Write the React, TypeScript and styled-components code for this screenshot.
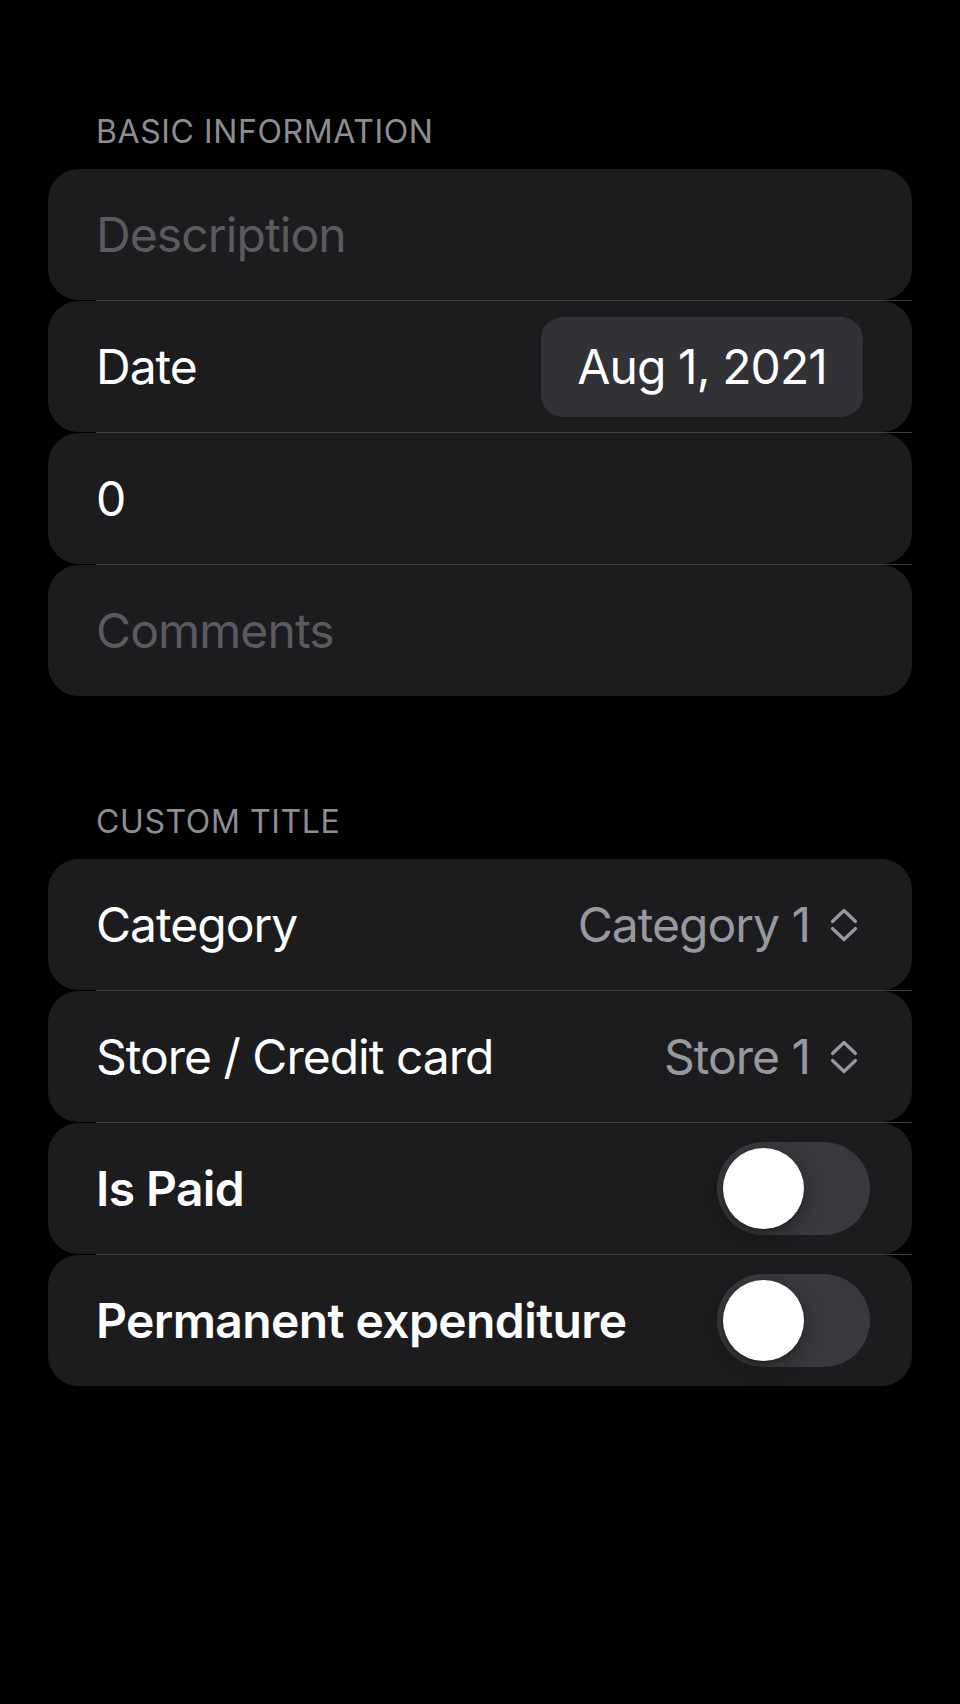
import React from "react";
import styled, { createGlobalStyle } from "styled-components";

const GlobalStyle = createGlobalStyle`
  html, body {
    margin: 0;
    padding: 0;
    background: #000;
  }
  * { box-sizing: border-box; }
`;

const Page = styled.div`
  width: 960px;
  min-height: 1704px;
  background: #000;
  padding: 106px 48px 0;
  font-family: Inter, "Noto Sans", sans-serif;
  -webkit-font-smoothing: antialiased;
`;

const Section = styled.section`
  margin-bottom: 100px;
`;

const SectionHeader = styled.div`
  padding-left: 48px;
  padding-top: 2px;
  font-size: 32px;
  line-height: 48px;
  color: #8d8d93;
  text-transform: uppercase;
  letter-spacing: 0.6px;
  margin-bottom: 13px;
`;

const List = styled.div`
  display: flex;
  flex-direction: column;
`;

const Row = styled.div`
  height: 131px;
  background: #1c1c1e;
  border-radius: 31px;
  display: flex;
  align-items: center;
  justify-content: space-between;
  padding: 0 48px;
`;

const Divider = styled.div`
  height: 1px;
  margin-left: 48px;
  background: #3d3d41;
`;

const Label = styled.span<{ $bold?: boolean }>`
  font-size: 48px;
  color: #fff;
  font-weight: ${(p) => (p.$bold ? 600 : 400)};
  letter-spacing: ${(p) => (p.$bold ? "-0.6px" : "-1px")};
  white-space: nowrap;
`;

const Placeholder = styled.span`
  font-size: 48px;
  color: #5a5a5f;
  letter-spacing: -0.9px;
`;

const DatePill = styled.div`
  height: 100px;
  padding: 0 36px;
  margin-right: 1px;
  border-radius: 22px;
  background: #323236;
  display: flex;
  align-items: center;
  font-size: 48px;
  color: #fff;
  letter-spacing: -0.9px;
`;

const Picker = styled.div`
  display: flex;
  align-items: center;
  gap: 20px;
  margin-right: 6px;
  font-size: 48px;
  color: #98989f;
  letter-spacing: -1px;
`;

const Switch = styled.div<{ $on?: boolean }>`
  width: 153px;
  height: 93px;
  border-radius: 47px;
  background: ${(p) => (p.$on ? "#34c759" : "#39393d")};
  margin-right: -6px;
  padding: 6px;
  display: flex;
  justify-content: ${(p) => (p.$on ? "flex-end" : "flex-start")};
`;

const Knob = styled.div`
  width: 81px;
  height: 81px;
  border-radius: 50%;
  background: #fff;
  box-shadow: 0 6px 18px rgba(0, 0, 0, 0.35), 0 2px 3px rgba(0, 0, 0, 0.2);
`;

const Chevrons = () => (
  <svg width="28" height="34" viewBox="0 0 28 34" fill="none">
    <path
      d="M2.5 13.5 L14 2.5 L25.5 13.5"
      stroke="#98989f"
      strokeWidth="3.2"
      strokeLinecap="round"
      strokeLinejoin="round"
    />
    <path
      d="M2.5 20.5 L14 31.5 L25.5 20.5"
      stroke="#98989f"
      strokeWidth="3.2"
      strokeLinecap="round"
      strokeLinejoin="round"
    />
  </svg>
);

export default function App() {
  return (
    <>
      <GlobalStyle />
      <Page>
        <Section>
          <SectionHeader>Basic Information</SectionHeader>
          <List>
            <Row>
              <Placeholder>Description</Placeholder>
            </Row>
            <Divider />
            <Row>
              <Label>Date</Label>
              <DatePill>Aug 1, 2021</DatePill>
            </Row>
            <Divider />
            <Row>
              <Label>0</Label>
            </Row>
            <Divider />
            <Row>
              <Placeholder>Comments</Placeholder>
            </Row>
          </List>
        </Section>
        <Section>
          <SectionHeader>Custom Title</SectionHeader>
          <List>
            <Row>
              <Label>Category</Label>
              <Picker>
                Category 1
                <Chevrons />
              </Picker>
            </Row>
            <Divider />
            <Row>
              <Label>Store / Credit card</Label>
              <Picker>
                Store 1
                <Chevrons />
              </Picker>
            </Row>
            <Divider />
            <Row>
              <Label $bold>Is Paid</Label>
              <Switch>
                <Knob />
              </Switch>
            </Row>
            <Divider />
            <Row>
              <Label $bold>Permanent expenditure</Label>
              <Switch>
                <Knob />
              </Switch>
            </Row>
          </List>
        </Section>
      </Page>
    </>
  );
}
